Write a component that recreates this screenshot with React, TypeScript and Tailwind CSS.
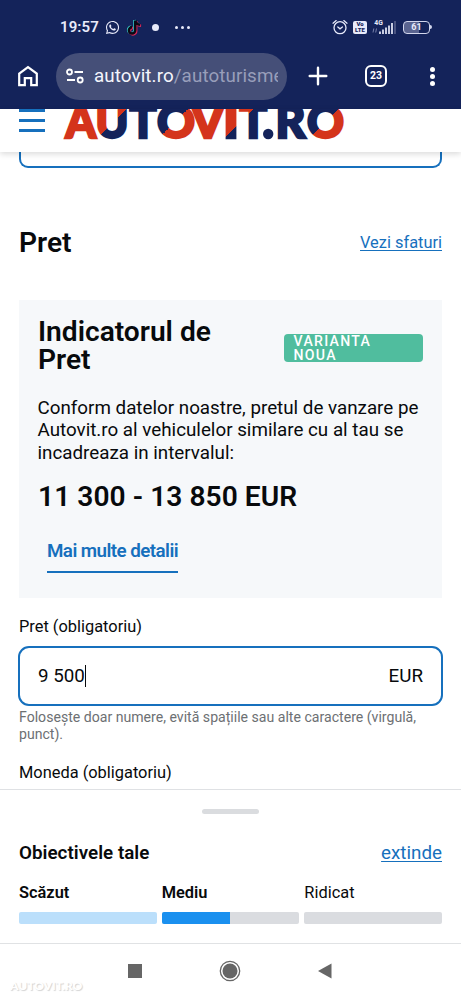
import { FaWhatsapp } from 'react-icons/fa';

// =========================
// DATA
// =========================

const NAVY = '#14235a';
const RED = '#d4341b';

const letters = [
  { char: 'A', x: 65.5, width: 30.5, fill: RED },
  { char: 'U', x: 95.5, width: 33, fill: 'url(#cut-u)' },
  { char: 'T', x: 129.5, width: 27, fill: NAVY },
  { char: 'O', x: 157, width: 38, fill: 'url(#cut-o)' },
  { char: 'V', x: 191.5, width: 32.5, fill: RED },
  { char: 'I', x: 223, width: 16, fill: 'url(#cut-it)' },
  { char: 'T', x: 239.5, width: 27.5, fill: 'url(#cut-t)' },
  { char: 'R', x: 275.5, width: 30, fill: NAVY },
  { char: 'O', x: 307, width: 37, fill: 'url(#cut-ro)' },
];

const levels = [
  { label: 'Scăzut', bold: true, value: 100, color: 'bg-[#bbdffb]' },
  { label: 'Mediu', bold: true, value: 50, color: 'bg-[#1a90ef]' },
  { label: 'Ridicat', bold: false, value: 0, color: 'bg-[#1a90ef]' },
];

// =========================
// LOGO
// =========================

// hard diagonal split along x + y = sum
function Cut({
  id,
  sum,
  from,
  to,
}: {
  id: string;
  sum: number;
  from: string;
  to: string;
}) {

  const x = sum - 120;

  return (
    <linearGradient
      id={id}
      gradientUnits="userSpaceOnUse"
      x1={x - 20}
      y1={100}
      x2={x + 20}
      y2={140}
    >
      <stop offset="0.5" stopColor={from} />
      <stop offset="0.5" stopColor={to} />
    </linearGradient>
  );
}

function Logo() {

  return (
    <svg
      viewBox="62 109 284 32"
      className="w-[284px] h-8 ml-[17px]"
    >
      <defs>
        <Cut id="cut-u" sum={236} from={RED} to={NAVY} />
        <Cut id="cut-o" sum={297} from={NAVY} to={RED} />
        <Cut id="cut-it" sum={362} from={RED} to={NAVY} />
        <Cut id="cut-t" sum={362} from={RED} to={NAVY} />
        <Cut id="cut-ro" sum={447} from={NAVY} to={RED} />
      </defs>

      {letters.map((l) => (
        <text
          key={l.x}
          x={l.x}
          y={137.6}
          textLength={l.width}
          lengthAdjust="spacingAndGlyphs"
          fill={l.fill}
          stroke={l.fill}
          strokeWidth={2.4}
          className="font-['Lato',sans-serif] font-black text-[45px]"
        >
          {l.char}
        </text>
      ))}

      <circle cx={268.2} cy={134} r={5.2} fill={NAVY} />
    </svg>
  );
}

// =========================
// BROWSER
// =========================

function StatusBar() {

  return (
    <div className="h-[52px] pl-[60px] pr-[29px] pt-[2px] flex items-center text-[#e8eafa]">

      <span className="text-[15px] font-semibold tracking-[0.1px] w-[45px]">
        19:57
      </span>

      <FaWhatsapp className="w-[15px] h-[15px]" />

      {/* TIKTOK */}
      <svg viewBox="0 0 24 24" className="w-[17px] h-[17px] ml-[6px]">
        <g fill="none" strokeWidth="3.6">
          <path d="M13 2v14a4.5 4.5 0 1 1-4.5-4.5M13 2c.5 4 3 6 7 6.2" stroke="#3ad6d3" transform="translate(-1 -.6)" />
          <path d="M13 2v14a4.5 4.5 0 1 1-4.5-4.5M13 2c.5 4 3 6 7 6.2" stroke="#e0285a" transform="translate(1.3 1.2)" />
          <path d="M13 2v14a4.5 4.5 0 1 1-4.5-4.5M13 2c.5 4 3 6 7 6.2" stroke="#0a0a14" />
        </g>
      </svg>

      <span className="w-[7px] h-[7px] rounded-full bg-[#e8eafa] ml-[9px]" />

      <div className="flex gap-[3px] ml-[16px]">
        <span className="w-[3px] h-[3px] rounded-full bg-[#e8eafa]" />
        <span className="w-[3px] h-[3px] rounded-full bg-[#e8eafa]" />
        <span className="w-[3px] h-[3px] rounded-full bg-[#e8eafa]" />
      </div>

      {/* ALARM */}
      <svg
        viewBox="0 0 16 16"
        className="w-[16px] h-[16px] ml-auto"
        fill="none"
        stroke="currentColor"
        strokeWidth="1.3"
        strokeLinecap="round"
      >
        <circle cx="8" cy="8.7" r="6" />
        <path d="M1 4.2 4.2 1.6M15 4.2 11.8 1.6M5.8 8l2.2 1.8L10.4 8" />
      </svg>

      <div className="w-[14px] h-[13px] rounded-[2px] bg-[#e8eafa] ml-[5px] flex flex-col items-center justify-center text-[#14235a] text-[6px] leading-[6px] font-black">
        <span>Vo</span>
        <span>LTE</span>
      </div>

      {/* SIGNAL */}
      <svg viewBox="0 0 25 16" className="w-[25px] h-[16px] ml-[5px]">
        <text x="2.3" y="6.2" className="text-[6.8px] font-bold" fill="#e8eafa">4G</text>
        <path d="M1.8 9.5 1 13.5M4.5 9.5l-.8 4" stroke="#7780ab" strokeWidth="1" />
        <path d="M8 12.5v2.5M11 10.5V15M14 8.5V15M17 6.5V15M20 4v11" stroke="#e8eafa" strokeWidth="1.7" />
        <path d="M23 2v13" stroke="#5b658f" strokeWidth="1.5" />
      </svg>

      <div className="w-[27px] h-[13px] rounded-[4px] border-[1.5px] border-[#d2d6ec] bg-[linear-gradient(90deg,#5a6490_60%,#14235a_60%)] ml-[6px] flex items-center justify-center text-[9px] leading-none font-bold">
        61
      </div>
      <span className="w-[2px] h-[4px] rounded-r-sm bg-[#d2d6ec]" />

    </div>
  );
}

function AddressBar() {

  return (
    <div className="h-[57px] pl-[17px] pb-[9px] flex items-center text-white">

      {/* HOME */}
      <svg
        viewBox="0 0 22 22"
        className="w-[22px] h-[22px] shrink-0"
        fill="none"
        stroke="currentColor"
        strokeWidth="2.2"
      >
        <path d="M2.2 8.6 11 2l8.8 6.6v11.5h-5.600v-7h-6.400v7H2.200z" />
      </svg>

      <div className="w-[231px] h-[47px] rounded-full bg-[#454f78] ml-[17px] pl-[10px] pr-[9px] flex items-center shrink-0">

        <svg
          viewBox="0 0 18 16"
          className="w-[18px] h-[16px] shrink-0"
          fill="none"
          stroke="currentColor"
          strokeWidth="1.8"
        >
          <circle cx="3.5" cy="4" r="2.5" />
          <path d="M8.500 4H17M1 12h8" />
          <circle cx="14.200" cy="12" r="2.500" />
        </svg>

        <div className="ml-[10px] flex-1 overflow-hidden whitespace-nowrap text-[18.8px] leading-6 tracking-[0.1px] text-[#f4f5fc]">
          autovit.ro<span className="text-[#989eba]">/autoturisme</span>
        </div>

      </div>

      {/* NEW TAB */}
      <svg
        viewBox="0 0 20 20"
        className="w-[20px] h-[20px] ml-[21px] shrink-0"
        fill="none"
        stroke="currentColor"
        strokeWidth="2.400"
        strokeLinecap="round"
      >
        <path d="M10 1.700v16.600M1.700 10h16.600" />
      </svg>

      <div className="w-[22px] h-[22px] rounded-[6px] border-[2.5px] border-white ml-[37px] flex items-center justify-center text-[10.5px] leading-none font-bold shrink-0">
        23
      </div>

      <div className="flex flex-col gap-[2px] ml-[43px]">
        <span className="w-[5px] h-[5px] rounded-full bg-white" />
        <span className="w-[5px] h-[5px] rounded-full bg-white" />
        <span className="w-[5px] h-[5px] rounded-full bg-white" />
      </div>

    </div>
  );
}

// =========================
// PAGE
// =========================

function PriceIndicator() {

  return (
    <div className="h-[298px] mt-[42.5px] px-[19px] pt-[18px] bg-[#f6f8fa]">

      <div className="flex justify-between items-start">

        <h2 className="w-[200px] text-[28.15px] leading-[28px] font-semibold">
          Indicatorul de Pret
        </h2>

        <div className="w-[139.5px] h-[28px] mt-[16.500px] rounded-[4px] bg-[#50bd9e] px-[10px] text-[14.1px] leading-[14px] tracking-[1.3px] font-medium text-white">
          VARIANTA NOUA
        </div>

      </div>

      <p className="-ml-[0.5px] mt-[23px] w-[390px] text-[18.8px] leading-[22.5px]">
        Conform datelor noastre, pretul de vanzare pe
        <br />
        Autovit.ro al vehiculelor similare cu al tau se
        <br />
        incadreaza in intervalul:
      </p>

      <div className="mt-[19px] text-[28.15px] leading-[28px] tracking-[0.05px] font-semibold">
        11 300 - 13 850 EUR
      </div>

      <button className="ml-[9px] mt-[28px] h-[34px] border-b-2 border-[#1670bd] text-[18.8px] leading-[24px] tracking-[-0.56px] font-semibold text-[#1670bd] flex items-start whitespace-nowrap">
        Mai multe detalii
      </button>

    </div>
  );
}

function Goals() {

  return (
    <div className="h-[154px] px-[19px] border-t border-[#dfe1e4] bg-white shrink-0">

      <div className="w-[57px] h-[5px] mt-[19px] mx-auto rounded-full bg-[#dadcdf]" />

      <div className="mt-[27px] h-[24px] flex justify-between items-center text-[18.8px]">
        <span className="font-semibold tracking-[0.03px]">Obiectivele tale</span>
        <a className="text-[#1670bd] underline underline-offset-2">extinde</a>
      </div>

      <div className="mt-[18px] grid grid-cols-3 gap-[5px]">
        {levels.map((level) => (
          <div key={level.label}>
            <div
              className={
                level.bold
                  ? 'text-[16.4px] leading-[20px] font-semibold'
                  : 'text-[16.4px] leading-[20px]'
              }
            >
              {level.label}
            </div>
            <div className="mt-[9px] h-[12px] rounded-[2px] bg-[#dadce0] overflow-hidden">
              <div
                className={`h-full ${level.color}`}
                style={{ width: `${level.value}%` }}
              />
            </div>
          </div>
        ))}
      </div>

    </div>
  );
}

function NavBar() {

  return (
    <div className="relative h-[56px] border-t border-[#e0e2e4] bg-white flex pt-[17px] pl-[128px] shrink-0">

      <span className="w-[14px] h-[14px] mt-[3px] bg-[#666666]" />

      <svg viewBox="0 0 22 22" className="w-[22px] h-[22px] ml-[77px] -mt-px">
        <circle cx="11" cy="11" r="9.700" fill="none" stroke="#666666" strokeWidth="1.300" />
        <circle cx="11" cy="11" r="7.500" fill="#666666" />
      </svg>

      <svg viewBox="0 0 14 16" className="w-[14px] h-[16px] ml-[77px] mt-[2px]">
        <path d="M0 8 13.500.5v15z" fill="#666666" />
      </svg>

      {/* WATERMARK */}
      <span className="absolute left-[10px] top-[34px] font-['Lato',sans-serif] font-black text-[12px] leading-[16px] text-white [text-shadow:1px_1px_1px_#d4d4d4]">
        AUTOVIT.RO
      </span>

    </div>
  );
}

export default function App() {

  return (
    <div className="w-[461px] h-[999px] overflow-hidden flex flex-col bg-white text-[#080a0c] font-['Roboto',sans-serif]">

      <div className="bg-[#14235a] shrink-0">
        <StatusBar />
        <AddressBar />
      </div>

      {/* SITE HEADER */}
      <div className="relative h-[43px] pl-[19px] flex items-start bg-white shadow-[0_2px_6px_rgba(0,0,0,0.15)] shrink-0">

        <div className="w-[26px] flex flex-col gap-[7px]">
          <span className="h-[3px] bg-[#1670bd]" />
          <span className="h-[3px] bg-[#1670bd]" />
          <span className="h-[3px] bg-[#1670bd]" />
        </div>

        <Logo />

      </div>

      <div className="px-[19px] flex-1 overflow-hidden">

        <div className="h-[16px] border-2 border-t-0 border-[#1670bd] rounded-b-[9px]" />

        <div className="mt-[61px] h-[28px] flex items-center justify-between">
          <h1 className="text-[28.15px] leading-[28px] font-semibold">
            Pret
          </h1>
          <a className="text-[16.4px] text-[#1670bd] underline underline-offset-2">
            Vezi sfaturi
          </a>
        </div>

        <PriceIndicator />

        <label className="block mt-[19px] text-[16.4px] leading-[20px]">
          Pret (obligatoriu)
        </label>

        <div className="-mx-px mt-[9.5px] h-[60px] px-[18px] border-2 border-[#1670bd] rounded-[11px] flex items-center justify-between text-[18.8px]">
          <div className="flex items-center">
            9 500
            <span className="w-px h-[22px] bg-[#080a0c]" />
          </div>
          <span className="text-[#080a0c]">EUR</span>
        </div>

        <p className="mt-[3px] text-[14.1px] leading-[17px] text-[#6d7073]">
          Folosește doar numere, evită spațiile sau alte caractere (virgulă, punct).
        </p>

        <label className="block mt-[19.5px] text-[16.4px] leading-[20px]">
          Moneda (obligatoriu)
        </label>

      </div>

      <Goals />
      <NavBar />

    </div>
  );
}
